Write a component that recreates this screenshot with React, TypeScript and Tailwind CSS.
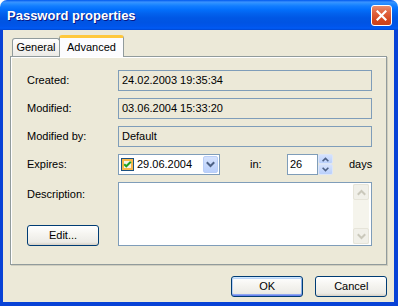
import React from 'react';

const Chevron = ({ up = false, color = '#4D6185', size = 9 }: { up?: boolean; color?: string; size?: number }) => (
  <svg width={size} height={size} viewBox="0 0 9 9">
    <path
      d={up ? 'M1.5 6 L4.5 3 L7.5 6' : 'M1.5 3 L4.5 6 L7.5 3'}
      fill="none"
      stroke={color}
      strokeWidth="2"
      strokeLinecap="square"
    />
  </svg>
);

const ReadOnlyField = ({ value }: { value: string }) => (
  <div className="w-[254px] h-[21px] border border-[#7F9DB9] bg-[#ECE9D8] flex items-center pl-[3px]">
    {value}
  </div>
);

const XPButton = ({ label, isDefault = false }: { label: string; isDefault?: boolean }) => (
  <div
    className={`w-[72px] h-[21px] flex items-center justify-center rounded-[3px] border border-[#003C74] bg-[linear-gradient(to_bottom,#FFFFFF_0%,#F6F5F1_40%,#ECEBE6_85%,#D6D0C5_100%)] ${
      isDefault
        ? 'shadow-[inset_0_1px_0_#CEE7FF,inset_0_-1px_0_#6982EE,inset_1px_0_0_#B8D0F6,inset_-1px_0_0_#89ADE4,inset_0_2px_0_#BCD4F6,inset_0_-2px_0_#8EA7F0]'
        : ''
    }`}
  >
    {label}
  </div>
);

export default function App() {
  return (
    <div className="w-[398px] h-[306px] flex flex-col font-['Liberation_Sans',Arial,sans-serif] text-[11px] text-black bg-white">
      {/* title bar */}
      <div className="h-[30px] shrink-0 rounded-t-[7px] flex items-center justify-between pl-[7px] pr-[6px] pt-px bg-[linear-gradient(to_bottom,#0058EE_0%,#3A93FF_7%,#288EFF_12%,#127DFF_20%,#036FFC_32%,#0262EE_45%,#0057E5_60%,#0054E3_75%,#0055EB_88%,#005BF5_94%,#0046D0_100%)]">
        <span className="text-white font-bold text-[13px] [text-shadow:1px_1px_#0A1883]">Password properties</span>
        <div className="w-[21px] h-[21px] rounded-[3px] border border-white bg-[linear-gradient(to_bottom,#E98E6F_0%,#E1633E_35%,#D4461D_75%,#C8421D_100%)] flex items-center justify-center">
          <svg width="11" height="11" viewBox="0 0 11 11">
            <path d="M1.5 1.5 L9.5 9.5 M9.5 1.5 L1.5 9.5" stroke="#FFFFFF" strokeWidth="2.2" strokeLinecap="square" />
          </svg>
        </div>
      </div>

      {/* frame + body */}
      <div className="flex-1 flex border-l-[3px] border-r-4 border-b-4 border-[#0842D6]">
        <div className="flex-1 bg-[#ECE9D8] flex flex-col pt-[5px] pl-[7px] pr-[7px]">
          {/* tabs */}
          <div className="h-[21px] flex items-end pl-[2px] relative z-10">
            <div className="w-[48px] h-[18px] border border-b-0 border-[#919B9C] rounded-t-[3px] bg-[linear-gradient(to_bottom,#FFFFFF,#ECEBE6)] flex items-center justify-center">
              General
            </div>
            <div className="w-[65px] h-[22px] -mb-px -ml-px border-x border-[#919B9C] border-t-[3px] border-t-[#FFC83C] rounded-t-[3px] bg-[#FCFCFE] flex items-center justify-center pb-px">
              Advanced
            </div>
          </div>

          {/* tab page */}
          <div className="h-[209px] border border-[#919B9C] shadow-[inset_1px_1px_0_#FFFFFF,1px_1px_0_#D0CEBF] pl-[16px] pr-[14px] pt-[13px] flex flex-col gap-[7px]">
            <div className="flex items-center h-[21px]">
              <span className="w-[91px]">Created:</span>
              <ReadOnlyField value="24.02.2003 19:35:34" />
            </div>
            <div className="flex items-center h-[21px]">
              <span className="w-[91px]">Modified:</span>
              <ReadOnlyField value="03.06.2004 15:33:20" />
            </div>
            <div className="flex items-center h-[21px]">
              <span className="w-[91px]">Modified by:</span>
              <ReadOnlyField value="Default" />
            </div>
            <div className="flex items-center h-[21px]">
              <span className="w-[91px]">Expires:</span>
              <div className="w-[102px] h-[21px] border border-[#7F9DB9] bg-white flex items-center pl-[2px] pr-px">
                <svg width="13" height="13" viewBox="0 0 13 13" className="shrink-0">
                  <rect x="0.5" y="0.5" width="12" height="12" fill="#FCE3A7" stroke="#1C5180" />
                  <rect x="1" y="1" width="11" height="11" fill="#F9B94A" />
                  <rect x="3" y="3" width="7" height="7" fill="#F4F2EA" />
                  <path d="M3.2 6.2 L5.3 8.3 L9.8 3.8" fill="none" stroke="#21A121" strokeWidth="2" />
                </svg>
                <span className="ml-[3px] flex-1">29.06.2004</span>
                <div className="w-[15px] h-[17px] rounded-[2px] border border-[#B9CEF7] bg-[linear-gradient(to_bottom,#D5E2FD,#BAD0FB)] flex items-center justify-center">
                  <Chevron />
                </div>
              </div>
              <span className="ml-[30px] w-[37px]">in:</span>
              <div className="w-[31px] h-[21px] border border-[#7F9DB9] bg-white flex items-center pl-[2px]">26</div>
              <div className="w-[15px] h-[21px] flex flex-col">
                <div className="h-[10px] rounded-[2px] border border-[#DCE6F8] bg-[linear-gradient(to_bottom,#D5E2FD,#BAD0FB)] flex items-center justify-center">
                  <Chevron up size={7} />
                </div>
                <div className="h-[11px] rounded-[2px] border border-[#DCE6F8] bg-[linear-gradient(to_bottom,#D5E2FD,#BAD0FB)] flex items-center justify-center">
                  <Chevron size={7} />
                </div>
              </div>
              <span className="ml-[16px]">days</span>
            </div>
            <div className="flex h-[64px]">
              <div className="w-[91px] flex flex-col justify-between pt-[4px]">
                <span>Description:</span>
                <XPButton label="Edit..." />
              </div>
              <div className="w-[254px] h-[64px] border border-[#7F9DB9] bg-white flex justify-end p-px pr-[2px]">
                <div className="w-[16px] flex flex-col justify-between bg-[#F5F4EC]">
                  <div className="h-[16px] rounded-[2px] border border-[#E6E4D9] bg-[#F1F0E9] flex items-center justify-center">
                    <Chevron up color="#CAC8BB" />
                  </div>
                  <div className="h-[16px] rounded-[2px] border border-[#E6E4D9] bg-[#F1F0E9] flex items-center justify-center">
                    <Chevron color="#CAC8BB" />
                  </div>
                </div>
              </div>
            </div>
          </div>

          {/* dialog buttons */}
          <div className="flex justify-end gap-[12px] mt-[11px]">
            <XPButton label="OK" isDefault />
            <XPButton label="Cancel" />
          </div>
        </div>
      </div>
    </div>
  );
}
